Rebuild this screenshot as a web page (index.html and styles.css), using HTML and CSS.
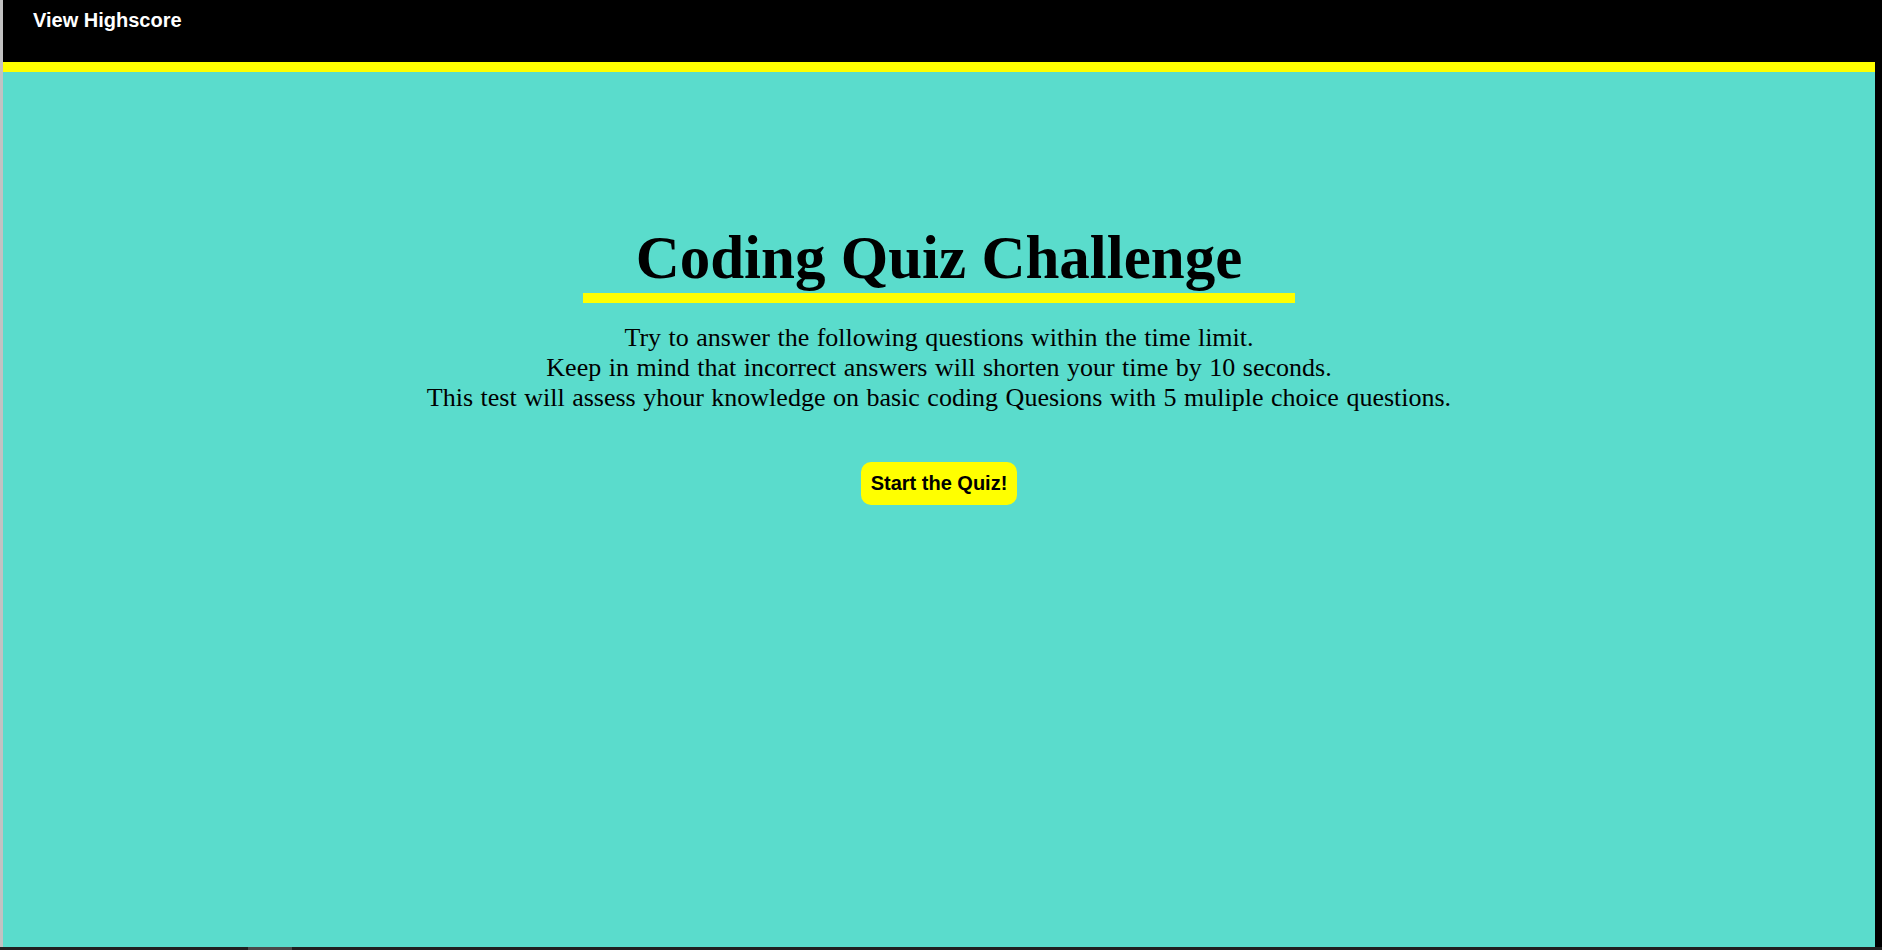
FILE: index.html
```html
<!DOCTYPE html>
<html lang="en">
<head>
<meta charset="utf-8">
<title>Coding Quiz Challenge</title>
<link rel="stylesheet" href="styles.css">
</head>
<body>
  <div class="window">
    <header class="topbar">
      <a class="highscore-link" href="#">View Highscore</a>
    </header>
    <main class="intro">
      <h1 class="title">Coding Quiz Challenge</h1>
      <p class="instructions">Try to answer the following questions within the time limit.<br>Keep in mind that incorrect answers will shorten your time by 10 seconds.<br>This test will assess yhour knowledge on basic coding Quesions with 5 muliple choice questions.</p>
      <button class="start-btn" type="button">Start the Quiz!</button>
    </main>
  </div>
  <div class="bottom-strip"><span class="scroll-thumb"></span></div>
</body>
</html>
```

FILE: styles.css
```css
html, body {
  margin: 0;
  padding: 0;
}

body {
  width: 1882px;
  height: 950px;
  background: #000;
  display: flex;
  flex-direction: column;
  overflow: hidden;
}

.window {
  width: 1872px;
  height: 947px;
  border-left: 3px solid #c2c2c2;
  background: #5adccc;
  display: flex;
  flex-direction: column;
}

.topbar {
  height: 53px;
  padding: 9px 0 0 30px;
  background: #000;
  border-bottom: 10px solid #ffff00;
}

.highscore-link {
  font-family: "Liberation Sans", Arial, sans-serif;
  font-weight: bold;
  font-size: 20px;
  color: #fff;
  text-decoration: none;
}

.intro {
  display: flex;
  flex-direction: column;
  align-items: center;
  padding-top: 151px;
}

.title {
  margin: 0;
  width: 712px;
  text-align: center;
  font-family: "Liberation Serif", "Times New Roman", serif;
  font-weight: bold;
  font-size: 61px;
  line-height: 70px;
  color: #000;
  border-bottom: 10px solid #ffff00;
}

.instructions {
  margin: 20px 0 0;
  text-align: center;
  font-family: "Liberation Serif", "Times New Roman", serif;
  font-size: 26px;
  line-height: 30px;
  word-spacing: 1px;
  color: #000;
}

.start-btn {
  margin-top: 49px;
  padding: 10px 10px;
  border: none;
  border-radius: 10px;
  background: #ffff00;
  color: #000;
  font-family: "Liberation Sans", Arial, sans-serif;
  font-weight: bold;
  font-size: 20px;
  line-height: 23px;
  cursor: pointer;
}

.bottom-strip {
  height: 3px;
  background: #202020;
  display: flex;
  padding-left: 248px;
}

.scroll-thumb {
  width: 44px;
  height: 3px;
  background: #4a4a4a;
}
```
